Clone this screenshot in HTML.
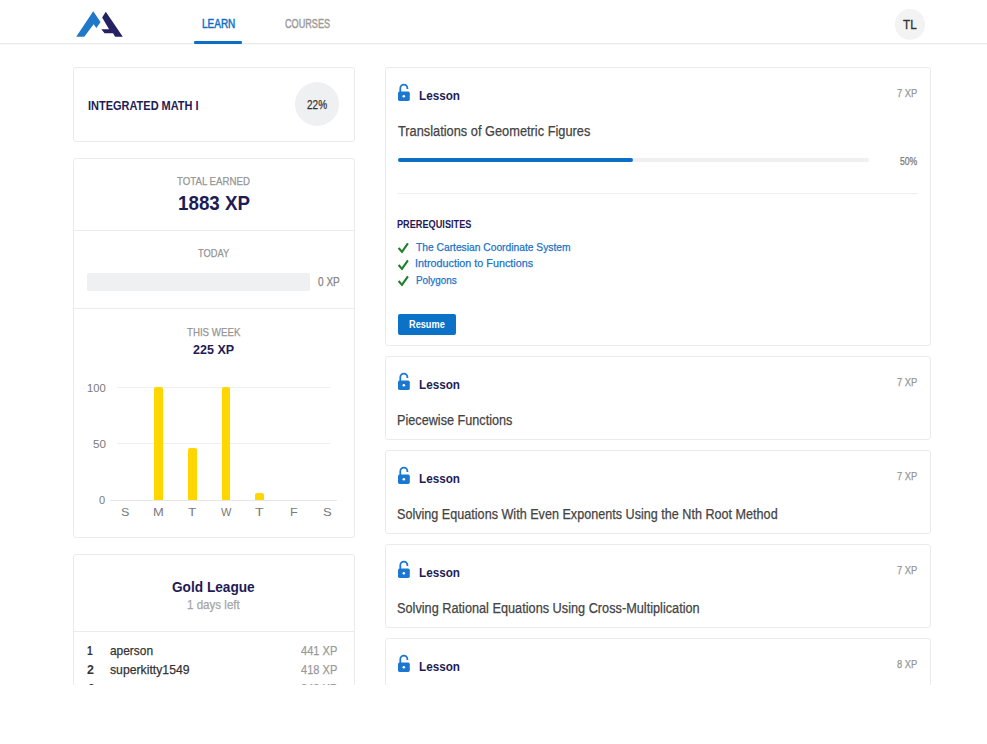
<!DOCTYPE html>
<html><head><meta charset="utf-8"><style>
html,body{margin:0;padding:0;background:#fff;}
body{width:987px;height:744px;overflow:hidden;position:relative;font-family:"Liberation Sans",sans-serif;}
.t{position:absolute;white-space:nowrap;transform-origin:0 0;font-family:"Liberation Sans",sans-serif;}
.a{position:absolute;box-sizing:border-box;}
.card{position:absolute;box-sizing:border-box;border:1px solid #ebebeb;border-radius:3px;background:#fff;}
.hl{position:absolute;height:1px;background:#ececec;}
.bar{position:absolute;background:#ffd600;border-radius:2px 2px 0 0;}

</style></head><body>
<div class="a" style="left:0;top:43px;width:987px;height:1px;background:#ececec"></div>
<div class="a" style="left:0;top:44px;width:987px;height:1px;background:#f6f6f6"></div>
<div class="a" style="left:194.1px;top:41.4px;width:48.3px;height:2.6px;border-radius:1.3px;background:#0d6ec6"></div>
<svg class="a" style="left:0;top:0" width="987" height="50" viewBox="0 0 987 50"><polygon fill="#1f78c8" points="93.23,11.35 100.52,21.88 96.47,27.96 93.63,24.31 84.31,36.87 76.21,36.87"/><polygon fill="#242262" points="105.79,11.75 122.8,36.87 115.1,36.87 113.08,33.23 104.57,33.23 101.33,29.17 109.03,29.17 102.14,17.42"/></svg>
<div class="a" style="left:894.6px;top:9.1px;width:30.6px;height:30.6px;border-radius:50%;background:#f3f3f3"></div>
<div class="card" style="left:73px;top:67px;width:282px;height:75px"></div>
<div class="a" style="left:295px;top:82px;width:44px;height:44px;border-radius:50%;background:#eff0f2"></div>
<div class="card" style="left:73px;top:158px;width:282px;height:380px"></div>
<div class="hl" style="left:74px;top:230px;width:280px"></div>
<div class="hl" style="left:74px;top:308px;width:280px"></div>
<div class="a" style="left:87.2px;top:273px;width:223px;height:17.5px;border-radius:2px;background:#eff0f2"></div>
<div class="a" style="left:117.3px;top:387px;width:212.7px;height:1px;background:#efefef"></div>
<div class="a" style="left:117.3px;top:443px;width:212.7px;height:1px;background:#efefef"></div>
<div class="a" style="left:109.8px;top:500px;width:227.5px;height:1px;background:#e6e6e6"></div>
<div class="bar" style="left:154.3px;top:387.1px;width:8.8px;height:113.3px"></div>
<div class="bar" style="left:187.8px;top:447.9px;width:8.8px;height:52.5px"></div>
<div class="bar" style="left:221.7px;top:387.1px;width:8.8px;height:113.3px"></div>
<div class="bar" style="left:255.4px;top:492.5px;width:8.7px;height:7.9px"></div>
<div class="card" style="left:73px;top:554px;width:282px;height:300px"></div>
<div class="hl" style="left:74px;top:631px;width:280px"></div>
<div class="card" style="left:385px;top:67px;width:546px;height:279px"></div>
<svg class="a" style="left:0;top:0px" width="420" height="110" viewBox="0 0 420 110"><rect x="398" y="91.6" width="11.8" height="9.3" rx="1.6" fill="#1a78d0"/><path d="M400.3 92 V88.2 A3.55 3.55 0 0 1 407.4 88.2 V88.9" fill="none" stroke="#1a78d0" stroke-width="1.8"/><circle cx="403.8" cy="96.3" r="1.25" fill="#fff"/></svg>
<div class="card" style="left:385px;top:356px;width:546px;height:84px"></div>
<svg class="a" style="left:0;top:289px" width="420" height="110" viewBox="0 0 420 110"><rect x="398" y="91.6" width="11.8" height="9.3" rx="1.6" fill="#1a78d0"/><path d="M400.3 92 V88.2 A3.55 3.55 0 0 1 407.4 88.2 V88.9" fill="none" stroke="#1a78d0" stroke-width="1.8"/><circle cx="403.8" cy="96.3" r="1.25" fill="#fff"/></svg>
<div class="card" style="left:385px;top:450px;width:546px;height:84px"></div>
<svg class="a" style="left:0;top:383px" width="420" height="110" viewBox="0 0 420 110"><rect x="398" y="91.6" width="11.8" height="9.3" rx="1.6" fill="#1a78d0"/><path d="M400.3 92 V88.2 A3.55 3.55 0 0 1 407.4 88.2 V88.9" fill="none" stroke="#1a78d0" stroke-width="1.8"/><circle cx="403.8" cy="96.3" r="1.25" fill="#fff"/></svg>
<div class="card" style="left:385px;top:544px;width:546px;height:84px"></div>
<svg class="a" style="left:0;top:477px" width="420" height="110" viewBox="0 0 420 110"><rect x="398" y="91.6" width="11.8" height="9.3" rx="1.6" fill="#1a78d0"/><path d="M400.3 92 V88.2 A3.55 3.55 0 0 1 407.4 88.2 V88.9" fill="none" stroke="#1a78d0" stroke-width="1.8"/><circle cx="403.8" cy="96.3" r="1.25" fill="#fff"/></svg>
<div class="card" style="left:385px;top:638px;width:546px;height:300px"></div>
<svg class="a" style="left:0;top:571px" width="420" height="110" viewBox="0 0 420 110"><rect x="398" y="91.6" width="11.8" height="9.3" rx="1.6" fill="#1a78d0"/><path d="M400.3 92 V88.2 A3.55 3.55 0 0 1 407.4 88.2 V88.9" fill="none" stroke="#1a78d0" stroke-width="1.8"/><circle cx="403.8" cy="96.3" r="1.25" fill="#fff"/></svg>
<div class="a" style="left:397.7px;top:158px;width:471.3px;height:4px;border-radius:2px;background:#eef0f2"></div>
<div class="a" style="left:397.7px;top:158px;width:235.7px;height:4px;border-radius:2px;background:#0d6ec6"></div>
<div class="hl" style="left:397.7px;top:193px;width:520px;background:#eeeeee"></div>
<svg class="a" style="left:0;top:0px" width="420" height="260" viewBox="0 0 420 260"><polyline points="398.6,248.0 402.0,251.9 407.9,243.4" fill="none" stroke="#1d7f2a" stroke-width="2.1"/></svg>
<svg class="a" style="left:0;top:16.7px" width="420" height="260" viewBox="0 0 420 260"><polyline points="398.6,248.0 402.0,251.9 407.9,243.4" fill="none" stroke="#1d7f2a" stroke-width="2.1"/></svg>
<svg class="a" style="left:0;top:33.4px" width="420" height="260" viewBox="0 0 420 260"><polyline points="398.6,248.0 402.0,251.9 407.9,243.4" fill="none" stroke="#1d7f2a" stroke-width="2.1"/></svg>
<div class="a" style="left:397.7px;top:313.8px;width:58.6px;height:21px;border-radius:2px;background:#0b72c7"></div>
<div id="txt">
<span class="t" style="left:201.60px;top:17.00px;font-size:12.29px;line-height:14px;font-weight:400;color:#0d6ec6;transform:scaleX(0.8134);-webkit-text-stroke:0.45px currentColor">LEARN</span>
<span class="t" style="left:285.34px;top:17.00px;font-size:12.11px;line-height:14px;font-weight:400;color:#9b9b9b;transform:scaleX(0.7528);-webkit-text-stroke:0.45px currentColor">COURSES</span>
<span class="t" style="left:902.77px;top:17.00px;font-size:12.75px;line-height:15px;font-weight:400;color:#333;transform:scaleX(0.9164);-webkit-text-stroke:0.35px currentColor">TL</span>
<span class="t" style="left:87.94px;top:98.00px;font-size:12.86px;line-height:15px;font-weight:700;color:#1e1b55;transform:scaleX(0.8539)">INTEGRATED MATH I</span>
<span class="t" style="left:306.50px;top:98.00px;font-size:12.43px;line-height:14px;font-weight:400;color:#333;transform:scaleX(0.8078);-webkit-text-stroke:0.25px currentColor">22%</span>
<span class="t" style="left:176.71px;top:175.00px;font-size:11.14px;line-height:12px;font-weight:400;color:#959595;transform:scaleX(0.8695);-webkit-text-stroke:0.25px currentColor">TOTAL EARNED</span>
<span class="t" style="left:177.67px;top:192.00px;font-size:19.57px;line-height:22px;font-weight:700;color:#1e1b55;transform:scaleX(0.9594)">1883 XP</span>
<span class="t" style="left:197.91px;top:247.00px;font-size:11.00px;line-height:12px;font-weight:400;color:#959595;transform:scaleX(0.8500);-webkit-text-stroke:0.25px currentColor">TODAY</span>
<span class="t" style="left:317.50px;top:275.00px;font-size:11.86px;line-height:14px;font-weight:400;color:#858585;transform:scaleX(0.8470);-webkit-text-stroke:0.25px currentColor">0 XP</span>
<span class="t" style="left:186.91px;top:326.00px;font-size:11.27px;line-height:12px;font-weight:400;color:#959595;transform:scaleX(0.8610);-webkit-text-stroke:0.25px currentColor">THIS WEEK</span>
<span class="t" style="left:193.02px;top:343.00px;font-size:11.86px;line-height:14px;font-weight:700;color:#1e1b55;transform:scaleX(1.0571)">225 XP</span>
<span class="t" style="left:172.05px;top:578.00px;font-size:15.14px;line-height:17px;font-weight:700;color:#1e1b55;transform:scaleX(0.9029)">Gold League</span>
<span class="t" style="left:187.09px;top:598.00px;font-size:12.17px;line-height:14px;font-weight:400;color:#a6a6a6;transform:scaleX(0.9531);-webkit-text-stroke:0.25px currentColor">1 days left</span>
<span class="t" style="left:87.19px;top:643.00px;font-size:12.75px;line-height:15px;font-weight:700;color:#333;transform:scaleX(0.8008)">1</span>
<span class="t" style="left:110.12px;top:643.00px;font-size:13.04px;line-height:15px;font-weight:400;color:#333;transform:scaleX(0.9132);-webkit-text-stroke:0.25px currentColor">aperson</span>
<span class="t" style="left:301.38px;top:643.00px;font-size:12.86px;line-height:15px;font-weight:400;color:#9a9a9a;transform:scaleX(0.8593);-webkit-text-stroke:0.25px currentColor">441 XP</span>
<span class="t" style="left:87.43px;top:662.00px;font-size:12.75px;line-height:15px;font-weight:700;color:#333;transform:scaleX(0.9761)">2</span>
<span class="t" style="left:110.36px;top:662.00px;font-size:13.04px;line-height:15px;font-weight:400;color:#333;transform:scaleX(0.9384);-webkit-text-stroke:0.25px currentColor">superkitty1549</span>
<span class="t" style="left:301.38px;top:662.00px;font-size:12.86px;line-height:15px;font-weight:400;color:#9a9a9a;transform:scaleX(0.8593);-webkit-text-stroke:0.25px currentColor">418 XP</span>
<span class="t" style="left:87.56px;top:681.00px;font-size:12.75px;line-height:15px;font-weight:700;color:#333;transform:scaleX(0.9566)">3</span>
<span class="t" style="left:109.93px;top:682.00px;font-size:12.33px;line-height:14px;font-weight:400;color:#333;transform:scaleX(0.8993);-webkit-text-stroke:0.25px currentColor">maroonoso</span>
<span class="t" style="left:301.27px;top:681.00px;font-size:12.86px;line-height:15px;font-weight:400;color:#9a9a9a;transform:scaleX(0.8620);-webkit-text-stroke:0.25px currentColor">348 XP</span>
<span class="t" style="left:418.90px;top:88.00px;font-size:13.48px;line-height:15px;font-weight:700;color:#1e1b55;transform:scaleX(0.8692)">Lesson</span>
<span class="t" style="left:897.13px;top:87.00px;font-size:11.45px;line-height:12px;font-weight:400;color:#959595;transform:scaleX(0.8224);-webkit-text-stroke:0.25px currentColor">7 XP</span>
<span class="t" style="left:397.94px;top:123.00px;font-size:14.49px;line-height:16px;font-weight:400;color:#444;transform:scaleX(0.8838);-webkit-text-stroke:0.25px currentColor">Translations of Geometric Figures</span>
<span class="t" style="left:418.90px;top:377.00px;font-size:13.48px;line-height:15px;font-weight:700;color:#1e1b55;transform:scaleX(0.8692)">Lesson</span>
<span class="t" style="left:897.13px;top:376.00px;font-size:11.45px;line-height:12px;font-weight:400;color:#959595;transform:scaleX(0.8224);-webkit-text-stroke:0.25px currentColor">7 XP</span>
<span class="t" style="left:396.89px;top:412.00px;font-size:14.49px;line-height:16px;font-weight:400;color:#444;transform:scaleX(0.8743);-webkit-text-stroke:0.25px currentColor">Piecewise Functions</span>
<span class="t" style="left:418.90px;top:471.00px;font-size:13.48px;line-height:15px;font-weight:700;color:#1e1b55;transform:scaleX(0.8692)">Lesson</span>
<span class="t" style="left:897.13px;top:470.00px;font-size:11.45px;line-height:12px;font-weight:400;color:#959595;transform:scaleX(0.8224);-webkit-text-stroke:0.25px currentColor">7 XP</span>
<span class="t" style="left:397.40px;top:506.00px;font-size:14.08px;line-height:16px;font-weight:400;color:#444;transform:scaleX(0.8958);-webkit-text-stroke:0.25px currentColor">Solving Equations With Even Exponents Using the Nth Root Method</span>
<span class="t" style="left:418.90px;top:565.00px;font-size:13.48px;line-height:15px;font-weight:700;color:#1e1b55;transform:scaleX(0.8692)">Lesson</span>
<span class="t" style="left:897.13px;top:564.00px;font-size:11.45px;line-height:12px;font-weight:400;color:#959595;transform:scaleX(0.8224);-webkit-text-stroke:0.25px currentColor">7 XP</span>
<span class="t" style="left:397.39px;top:600.00px;font-size:14.08px;line-height:16px;font-weight:400;color:#444;transform:scaleX(0.9038);-webkit-text-stroke:0.25px currentColor">Solving Rational Equations Using Cross-Multiplication</span>
<span class="t" style="left:418.90px;top:659.00px;font-size:13.48px;line-height:15px;font-weight:700;color:#1e1b55;transform:scaleX(0.8692)">Lesson</span>
<span class="t" style="left:897.23px;top:658.00px;font-size:11.45px;line-height:12px;font-weight:400;color:#959595;transform:scaleX(0.8184);-webkit-text-stroke:0.25px currentColor">8 XP</span>
<span class="t" style="left:900.45px;top:155.00px;font-size:11.14px;line-height:12px;font-weight:400;color:#777;transform:scaleX(0.7756);-webkit-text-stroke:0.25px currentColor">50%</span>
<span class="t" style="left:397.15px;top:218.00px;font-size:11.14px;line-height:12px;font-weight:700;color:#1e1b55;transform:scaleX(0.8240)">PREREQUISITES</span>
<span class="t" style="left:416.09px;top:241.00px;font-size:11.16px;line-height:12px;font-weight:400;color:#1a73c8;transform:scaleX(0.9195);-webkit-text-stroke:0.25px currentColor">The Cartesian Coordinate System</span>
<span class="t" style="left:415.33px;top:257.00px;font-size:11.45px;line-height:12px;font-weight:400;color:#1a73c8;transform:scaleX(0.9427);-webkit-text-stroke:0.25px currentColor">Introduction to Functions</span>
<span class="t" style="left:415.51px;top:274.00px;font-size:10.58px;line-height:12px;font-weight:400;color:#1a73c8;transform:scaleX(0.9349);-webkit-text-stroke:0.25px currentColor">Polygons</span>
<span class="t" style="left:408.95px;top:317.00px;font-size:11.74px;line-height:13px;font-weight:700;color:#fff;transform:scaleX(0.7837)">Resume</span>
<span class="t" style="left:86.92px;top:382.00px;font-size:11.59px;line-height:12px;font-weight:400;color:#7a7a7a;transform:scaleX(0.9661)">100</span>
<span class="t" style="left:92.63px;top:438.00px;font-size:11.01px;line-height:12px;font-weight:400;color:#7a7a7a;transform:scaleX(1.0602)">50</span>
<span class="t" style="left:99.47px;top:494.00px;font-size:10.86px;line-height:12px;font-weight:400;color:#7a7a7a;transform:scaleX(1.0150)">0</span>
<span class="t" style="left:120.70px;top:506.00px;font-size:10.85px;line-height:12px;font-weight:400;color:#7a7a7a;transform:scaleX(1.1565)">S</span>
<span class="t" style="left:153.26px;top:506.00px;font-size:11.16px;line-height:12px;font-weight:400;color:#7a7a7a;transform:scaleX(1.1597)">M</span>
<span class="t" style="left:187.83px;top:506.00px;font-size:11.16px;line-height:12px;font-weight:400;color:#7a7a7a;transform:scaleX(1.2105)">T</span>
<span class="t" style="left:220.70px;top:506.00px;font-size:11.16px;line-height:12px;font-weight:400;color:#7a7a7a;transform:scaleX(0.9904)">W</span>
<span class="t" style="left:255.42px;top:506.00px;font-size:11.16px;line-height:12px;font-weight:400;color:#7a7a7a;transform:scaleX(1.2734)">T</span>
<span class="t" style="left:289.59px;top:506.00px;font-size:11.16px;line-height:12px;font-weight:400;color:#7a7a7a;transform:scaleX(1.1291)">F</span>
<span class="t" style="left:322.68px;top:506.00px;font-size:10.85px;line-height:12px;font-weight:400;color:#7a7a7a;transform:scaleX(1.2034)">S</span>
</div>
<div class="a" style="left:0;top:685px;width:987px;height:59px;background:#fff"></div>
</body></html>
